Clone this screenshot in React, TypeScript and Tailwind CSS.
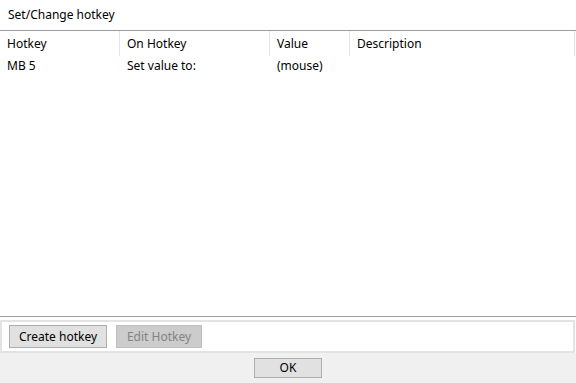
export default function App() {
  const cols = [
    { name: 'Hotkey', w: 'w-[120px]' },
    { name: 'On Hotkey', w: 'w-[150px]' },
    { name: 'Value', w: 'w-[80px]' },
    { name: 'Description', w: 'w-[225px]' },
  ]
  return (
    <div className="w-[576px] h-[383px] flex flex-col bg-white text-[12px] text-black" style={{ fontFamily: '"Noto Sans", "Noto Sans CJK KR", sans-serif' }}>
      <div className="h-[30px] flex items-center px-2 leading-none">Set/Change hotkey</div>
      <div className="h-px bg-[#9b9aa8]" />
      {/* list */}
      <div className="flex-1 flex flex-col">
        <div className="h-[25px] flex">
          {cols.map((c) => (
            <div key={c.name} className={`${c.w} h-full flex items-center px-[7px] border-r border-[#e5e5e5]`}>{c.name}</div>
          ))}
        </div>
        <div className="h-[20px] flex items-center">
          <div className="w-[120px] px-[7px]">MB 5</div>
          <div className="w-[150px] px-[7px]">Set value to:</div>
          <div className="w-[80px] px-[7px]">(mouse)</div>
          <div className="w-[225px] px-[7px]"></div>
        </div>
      </div>
      <div className="h-px bg-[#a0a0a0]" />
      <div className="h-[36px] pt-[3px] pr-px">
        <div className="h-[33px] border-2 border-[#e3e3e3] flex items-center gap-[9px] pl-[7px]">
          <button className="w-[98px] h-[23px] border border-[#adadad] bg-[#e1e1e1] flex items-center justify-center">Create hotkey</button>
          <button className="w-[86px] h-[23px] border border-[#bfbfbf] bg-[#cccccc] text-[#838383] flex items-center justify-center">Edit Hotkey</button>
        </div>
      </div>
      <div className="h-[30px] bg-[#f0f0f0] flex items-center justify-center">
        <button className="w-[68px] h-[20px] border border-[#adadad] bg-[#e1e1e1] flex items-center justify-center">OK</button>
      </div>
    </div>
  )
}
